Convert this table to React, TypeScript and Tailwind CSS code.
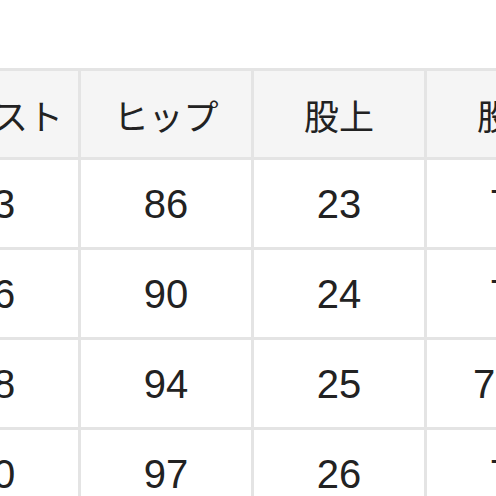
const headers = ["ウエスト", "ヒップ", "股上", "股下"];

const rows = [
  ["63", "86", "23", "76"],
  ["66", "90", "24", "77"],
  ["68", "94", "25", "78.5"],
  ["70", "97", "26", "79"],
];

export default function App() {
  return (
    <div className="w-[496px] h-[496px] overflow-hidden bg-white">
      <div className="pt-[68px] ml-[-95px]">
        <div className="grid grid-cols-[repeat(4,170px)] grid-rows-[86px_repeat(4,87px)] gap-[3px] p-[3px] bg-[#e4e4e4] w-max">
          {headers.map((h) => (
            <div
              key={h}
              className="bg-[#f5f5f5] flex items-center justify-center text-[35px] text-[#222] font-['Noto_Sans_CJK_JP','Noto_Sans',sans-serif] leading-none"
            >
              {h}
            </div>
          ))}
          {rows.map((r, i) =>
            r.map((v, j) => (
              <div
                key={`${i}-${j}`}
                className="bg-white flex items-center justify-center text-[40px] text-[#222] font-['Liberation_Sans',Arial,sans-serif] leading-none"
              >
                {v}
              </div>
            ))
          )}
        </div>
      </div>
    </div>
  );
}
